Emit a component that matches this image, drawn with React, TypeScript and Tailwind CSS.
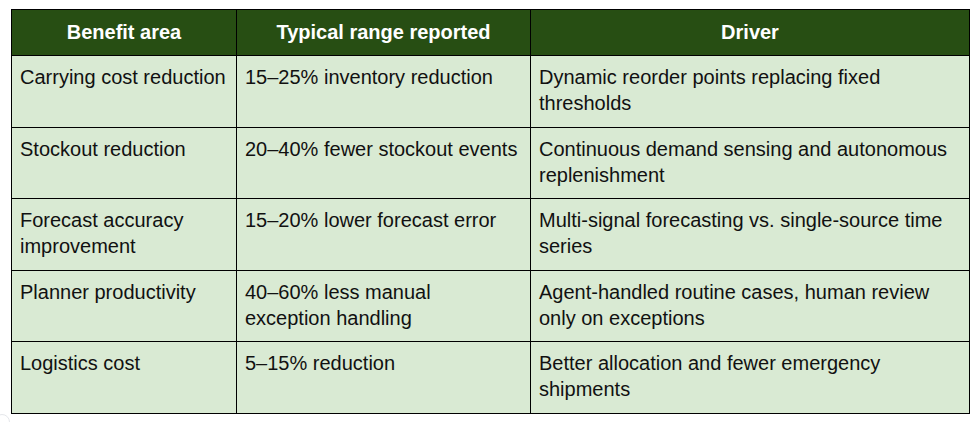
const rows: [string, string, string][] = [
  ['Carrying cost reduction', '15–25% inventory reduction', 'Dynamic reorder points replacing fixed thresholds'],
  ['Stockout reduction', '20–40% fewer stockout events', 'Continuous demand sensing and autonomous replenishment'],
  ['Forecast accuracy improvement', '15–20% lower forecast error', 'Multi-signal forecasting vs. single-source time series'],
  ['Planner productivity', '40–60% less manual exception handling', 'Agent-handled routine cases, human review only on exceptions'],
  ['Logistics cost', '5–15% reduction', 'Better allocation and fewer emergency shipments'],
]

export default function App() {
  return (
    <div className="relative h-[422px] w-[977px] overflow-hidden bg-white pl-[11px] pt-[9px] font-['Liberation_Sans',Arial,sans-serif]">
      <table className="w-[958px] table-fixed border-collapse text-[20px] leading-[26px]">
        <colgroup>
          <col className="w-[225px]" />
          <col className="w-[294px]" />
          <col className="w-[439px]" />
        </colgroup>
        <thead>
          <tr className="bg-[#274e13] text-white">
            <th className="border border-black px-[8px] pt-[9px] pb-[10px] text-center font-bold">Benefit area</th>
            <th className="border border-black px-[8px] pt-[9px] pb-[10px] text-center font-bold">Typical range reported</th>
            <th className="border border-black px-[8px] pt-[9px] pb-[10px] text-center font-bold">Driver</th>
          </tr>
        </thead>
        <tbody>
          {rows.map((r) => (
            <tr key={r[0]} className="bg-[#d9ead3] text-[#111]">
              {r.map((c, i) => (
                <td key={i} className="border border-black pl-[8px] pr-[10px] pt-[8px] pb-[10.5px] align-top">
                  <div className="min-h-[52px]">{c}</div>
                </td>
              ))}
            </tr>
          ))}
        </tbody>
      </table>
      <div className="absolute -left-[6px] top-[414px] h-[16px] w-[16px] rounded-full border border-gray-200" />
    </div>
  )
}
